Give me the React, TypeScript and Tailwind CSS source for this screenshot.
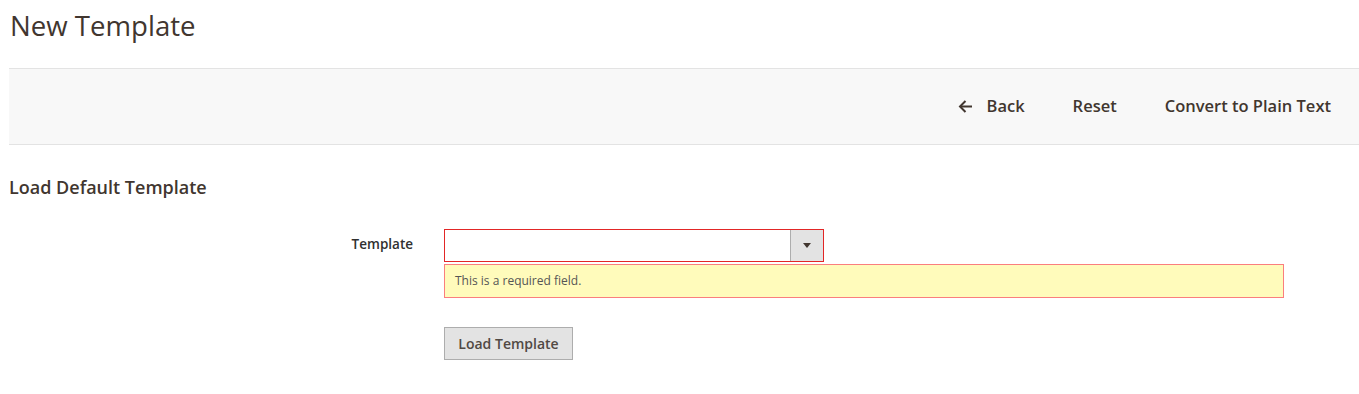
import React from 'react';

const font = { fontFamily: '"Open Sans", "Noto Sans", sans-serif' };

const BackArrow = () => (
  <svg width="15" height="13" viewBox="0 0 15 13" fill="none" className="mr-[14px]">
    <path d="M14 6.5H2" stroke="#41362f" strokeWidth="2" />
    <path d="M7.5 1L2 6.5L7.5 12" stroke="#41362f" strokeWidth="2" />
  </svg>
);

export default function App() {
  return (
    <div className="w-[1359px] h-[394px] bg-white pl-[9px] text-[#41362f]" style={font}>
      <h1 className="pt-[8px] pl-px text-[27.6px] leading-[34px] font-normal text-[#41362f]">New Template</h1>

      <div className="mt-[26px] h-[77px] bg-[#f8f8f8] border-t border-b border-[#e3e3e3] flex items-center justify-end gap-12 pr-[28px]">
        <button className="flex items-center text-[16.5px] font-semibold text-[#41362f]">
          <BackArrow />
          Back
        </button>
        <button className="text-[16.5px] font-semibold text-[#41362f]">Reset</button>
        <button className="text-[16.5px] font-semibold text-[#41362f]">Convert to Plain Text</button>
      </div>

      <h2 className="mt-[31px] text-[18px] leading-[22px] font-semibold text-[#41362f]">Load Default Template</h2>

      <div className="mt-[31px] flex">
        <label className="w-[405px] pr-[1px] text-right text-[13.5px] font-semibold leading-[31px] text-[#303030]">Template</label>
        <div className="ml-[30px] flex flex-col">
          <div className="w-[380px] h-[33px] border border-[#e22626] bg-white flex">
            <div className="flex-1" />
            <div className="w-[33px] h-full bg-[#e3e3e3] border-l border-[#adadad] flex items-center justify-center">
              <svg width="8" height="5" viewBox="0 0 8 5">
                <path d="M0 0H8L4 5Z" fill="#41362f" />
              </svg>
            </div>
          </div>
          <div className="mt-[2px] w-[840px] h-[34px] border border-[#fa7e7e] bg-[#fffbbb] px-[10px] flex items-center text-[12px] text-[#555]">
            This is a required field.
          </div>
          <button className="mt-[29px] w-[129px] h-[33px] bg-[#e3e3e3] border border-[#adadad] text-[14px] font-semibold text-[#514943]">
            Load Template
          </button>
        </div>
      </div>
    </div>
  );
}
